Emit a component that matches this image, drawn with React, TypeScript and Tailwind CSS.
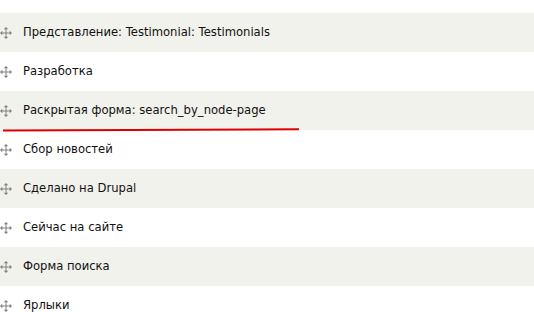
const rows = [
  "Представление: Testimonial: Testimonials",
  "Разработка",
  "Раскрытая форма: search_by_node-page",
  "Сбор новостей",
  "Сделано на Drupal",
  "Сейчас на сайте",
  "Форма поиска",
  "Ярлыки",
];

function DragHandle() {
  return (
    <svg width="12" height="12" viewBox="0 0 12 12" className="shrink-0">
      <g fill="#808080">
        <rect x="5.5" y="2" width="1" height="8" />
        <rect x="2" y="5.5" width="8" height="1" />
        <path d="M6 0 L8.3 2.3 L3.7 2.3 Z" />
        <path d="M6 12 L8.3 9.7 L3.7 9.7 Z" />
        <path d="M0 6 L2.3 3.7 L2.3 8.3 Z" />
        <path d="M12 6 L9.7 3.7 L9.7 8.3 Z" />
      </g>
    </svg>
  );
}

export default function App() {
  return (
    <div className="relative w-[534px] h-[312px] overflow-hidden bg-white pt-[13px] font-['DejaVu_Sans',sans-serif] text-[11.6px] text-[#111]">
      {rows.map((r, i) => (
        <div
          key={i}
          className={`flex h-[39px] items-center gap-[11px] ${i % 2 === 0 ? "bg-[#f2f2ed]" : "bg-white"}`}
        >
          <DragHandle />
          <span>{r}</span>
        </div>
      ))}
      <svg className="absolute left-0 top-0" width="534" height="312">
        <line x1="3" y1="130.5" x2="299" y2="129.3" stroke="#dd0000" strokeWidth="2" />
      </svg>
    </div>
  );
}
